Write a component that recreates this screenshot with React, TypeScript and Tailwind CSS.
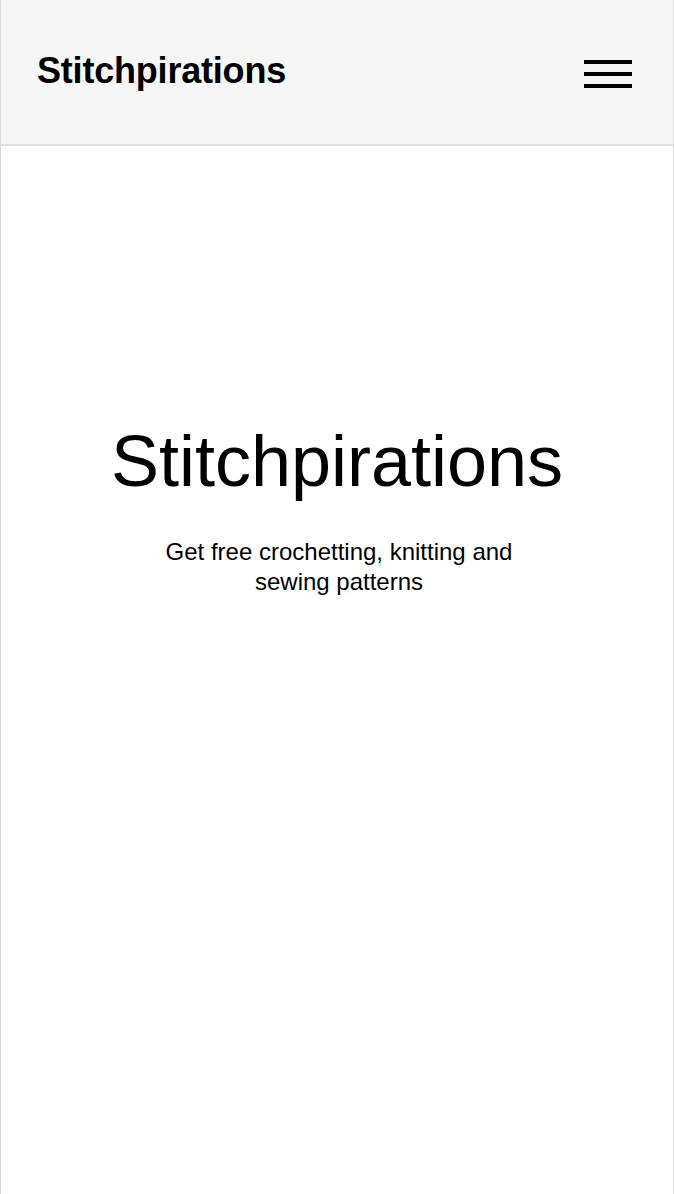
// Stitchpirations — landing hero with top bar

const FONT = { fontFamily: '"Liberation Sans", Arial, Helvetica, sans-serif' };

function Hamburger() {
  return (
    <button aria-label="Menu" className="mt-[60px] flex w-12 flex-col gap-2">
      <span className="block h-1 w-12 bg-black" />
      <span className="block h-1 w-12 bg-black" />
      <span className="block h-1 w-12 bg-black" />
    </button>
  );
}

export default function App() {
  return (
    <div style={FONT} className="flex min-h-[1194px] w-full flex-col border-x border-[#dcdcdc] bg-white text-black">
      <header className="flex h-[146px] items-start justify-between border-b-2 border-[#e2e2e2] bg-[#f6f6f6] pl-[36px] pr-[41px]">
        <h1 className="pt-[53px] text-[36px] font-bold leading-[36px] tracking-[-0.2px]">Stitchpirations</h1>
        <Hamburger />
      </header>

      <main className="flex flex-1 flex-col items-center pt-[279px] text-center">
        <h2 className="text-[72px] font-normal leading-[72px]">Stitchpirations</h2>
        <p className="mt-[40px] max-w-[400px] pl-[4px] text-[24px] leading-[30px]">
          Get free crochetting, knitting and sewing patterns
        </p>
      </main>
    </div>
  );
}
